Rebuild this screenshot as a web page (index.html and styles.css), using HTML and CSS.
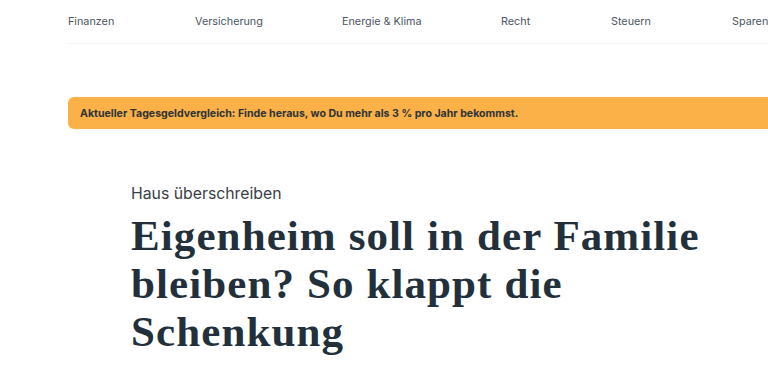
FILE: index.html
```html
<!DOCTYPE html>
<html lang="de">
<head>
<meta charset="utf-8">
<link rel="stylesheet" href="styles.css">
</head>
<body>
<div class="page">
  <nav class="nav">
    <a class="nav-item">Finanzen</a>
    <a class="nav-item">Versicherung</a>
    <a class="nav-item">Energie &amp; Klima</a>
    <a class="nav-item">Recht</a>
    <a class="nav-item">Steuern</a>
    <a class="nav-item">Sparen</a>
  </nav>
  <div class="banner">Aktueller Tagesgeldvergleich: Finde heraus, wo Du mehr als 3&nbsp;% pro Jahr bekommst.</div>
  <article class="article">
    <p class="kicker">Haus überschreiben</p>
    <h1 class="headline">Eigenheim soll in der Familie bleiben? So klappt die Schenkung</h1>
  </article>
</div>
</body>
</html>
```

FILE: styles.css
```css
html, body {
  margin: 0;
  padding: 0;
  background: #fff;
  overflow: hidden;
}
.page {
  padding-left: 68px;
  width: 900px;
  font-family: Inter, "Noto Sans", sans-serif;
}
.nav {
  display: flex;
  height: 42px;
  padding-bottom: 1px;
  align-items: center;
  border-bottom: 1px solid #f3f4f6;
  font-size: 10.8px;
  color: #4b5563;
}
.nav-item {
  flex: none;
}
.nav-item:nth-child(1) { width: 127px; }
.nav-item:nth-child(2) { width: 147px; }
.nav-item:nth-child(3) { width: 159px; }
.nav-item:nth-child(4) { width: 110px; }
.nav-item:nth-child(5) { width: 121px; }
.banner {
  margin-top: 53px;
  height: 32px;
  display: flex;
  align-items: center;
  padding-left: 12px;
  background: #fbb147;
  border-radius: 6px;
  font-size: 10.6px;
  font-weight: 700;
  color: #2d3338;
}
.article {
  padding-left: 63px;
  padding-top: 54px;
}
.kicker {
  margin: 0;
  font-size: 15.8px;
  line-height: 22px;
  color: #3a4047;
}
.headline {
  margin: 7px 0 0;
  width: 620px;
  font-family: "Liberation Serif", serif;
  font-weight: 700;
  font-size: 43px;
  line-height: 48px;
  color: #22303b;
  letter-spacing: 1.1px;
}
```
